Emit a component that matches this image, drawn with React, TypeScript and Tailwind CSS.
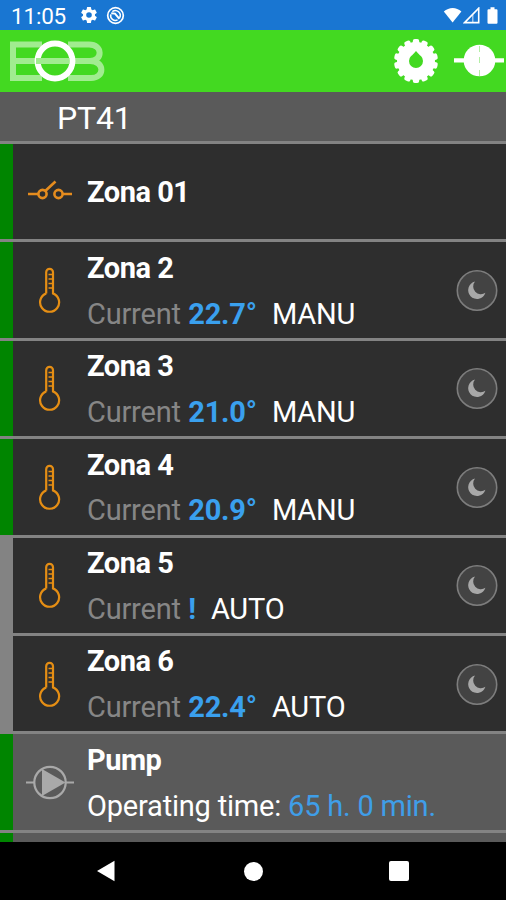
import clsx from "clsx";

type Zone = {
  name: string;
  online: boolean;
  temperature?: string;
  mode?: string;
};

const zones: Zone[] = [
  { name: "Zona 01", online: true },
  { name: "Zona 2", online: true, temperature: "22.7°", mode: "MANU" },
  { name: "Zona 3", online: true, temperature: "21.0°", mode: "MANU" },
  { name: "Zona 4", online: true, temperature: "20.9°", mode: "MANU" },
  { name: "Zona 5", online: false, temperature: "!", mode: "AUTO" },
  { name: "Zona 6", online: false, temperature: "22.4°", mode: "AUTO" },
];

const teeth = Array.from({ length: 14 }, (_, i) => (i * 360) / 14);

function StatusBar() {
  return (
    <div className="flex h-[30px] shrink-0 items-center bg-[#1976d2] pl-[11px] pr-[7px] text-white">
      <span className="w-[70px] pt-[3px] text-[22.5px] leading-none tracking-[-0.2px]">11:05</span>
      <svg width="16" height="16" viewBox="2 2 20 20" fill="currentColor">
        <path
          fillRule="evenodd"
          d="M19.43 12.98a7.8 7.8 0 0 0 0-1.96l2.11-1.65a.5.5 0 0 0 .12-.64l-2-3.46a.5.5 0 0 0-.61-.22l-2.49 1a7.3 7.3 0 0 0-1.69-.98l-.38-2.65A.49.49 0 0 0 14 2h-4a.49.49 0 0 0-.49.42l-.38 2.65c-.61.25-1.17.59-1.69.98l-2.49-1a.5.5 0 0 0-.61.22l-2 3.46a.5.5 0 0 0 .12.64l2.11 1.65a7.9 7.9 0 0 0 0 1.96l-2.11 1.65a.5.5 0 0 0-.12.64l2 3.46c.12.22.39.3.61.22l2.49-1c.52.4 1.08.73 1.69.98l.38 2.65c.03.24.24.42.49.42h4c.25 0 .46-.18.49-.42l.38-2.65c.61-.25 1.17-.59 1.69-.98l2.49 1c.23.09.49 0 .61-.22l2-3.46a.5.5 0 0 0-.12-.64zM12 15.5a3.5 3.5 0 1 1 0-7 3.5 3.5 0 0 1 0 7z"
        />
      </svg>
      <svg className="ml-[9px]" width="19" height="19" viewBox="0 0 19 19" fill="none" stroke="currentColor">
        <circle cx="9.5" cy="9.5" r="7.8" strokeWidth="1.7" />
        <path d="M6.3 5.6a4.9 4.9 0 0 1 7.2 6.4M4.8 8.4a4.8 4.8 0 0 0 6.8 5.5" strokeWidth="1.5" />
        <path d="M5.2 7.2 9 7.6 13.4 12.8" strokeWidth="2" />
      </svg>
      <div className="ml-auto flex items-center">
        <svg width="20" height="16" viewBox="0 0 20 16" fill="currentColor">
          <path d="M.8 4.5C6-.2 13.4-.2 18.4 4.5L9.6 15.4z" />
        </svg>
        <svg width="18" height="17" viewBox="0 0 18 17">
          <path d="M1.6 15.6 15.7 1.2V15.6z" fill="none" stroke="currentColor" strokeWidth="1.6" />
          <path d="M9.8 7.8V15" fill="none" stroke="currentColor" strokeWidth="1.2" opacity=".7" />
        </svg>
        <svg className="ml-[6px]" width="12" height="17" viewBox="0 0 12 17" fill="currentColor">
          <path d="M3.5.3h4v2h2a1 1 0 0 1 1 1V15.7a1 1 0 0 1-1 1h-8a1 1 0 0 1-1-1V3.3a1 1 0 0 1 1-1h2z" />
        </svg>
      </div>
    </div>
  );
}

function Logo() {
  return (
    <svg width="96" height="44" viewBox="0 0 96 44" fill="none">
      <path
        d="M32 5.5H3V39H32M3 22H83M58 5.5H79C93 5.5 93 22 80 22C95 22 95 39 81 39H58"
        opacity=".5"
        stroke="white"
        strokeWidth="6"
      />
      <circle cx="45" cy="22" r="17.4" fill="#43d921" stroke="white" strokeWidth="6" />
      <path d="M26 22H59.5" stroke="#a1ec90" strokeWidth="6" />
    </svg>
  );
}

function Toolbar() {
  return (
    <header className="flex h-[62px] shrink-0 items-center justify-between bg-[#43d921] pl-[10px]">
      <Logo />
      <div className="flex items-center">
        <svg width="46" height="46" viewBox="-23 -23 46 46" fill="white">
          {teeth.map((angle) => (
            <rect key={angle} x="-3.2" y="-22" width="6.4" height="8" rx="2" transform={`rotate(${angle})`} />
          ))}
          <circle r="13" fill="none" stroke="white" strokeWidth="12" />
          <path d="M-4-5.5 0-10 4-5.5z" fill="#43d921" />
        </svg>
        <svg className="ml-[14px]" width="53" height="36" viewBox="0 0 53 36" fill="white">
          <path d="M1 15.2H51V19.4H1z" />
          <circle cx="26.5" cy="17.5" r="15.8" />
          <path d="M26.5 3V9M26.5 14V20M26.5 27V33" stroke="#43d921" strokeWidth="1" opacity=".4" />
        </svg>
      </div>
    </header>
  );
}

function SwitchIcon() {
  return (
    <svg width="48" height="24" viewBox="0 0 48 24" fill="none" stroke="#e58c1e" strokeWidth="2.6">
      <path d="M2 14H12M36 14H46M19.5 10.8 29.5 1.5" />
      <circle cx="16.5" cy="14" r="4.1" />
      <circle cx="32.5" cy="14" r="4.1" />
    </svg>
  );
}

function ThermometerIcon() {
  return (
    <svg width="24" height="46" viewBox="0 0 24 46" fill="none" stroke="#e58e14" strokeWidth="2.2">
      <path d="M8.4 26V5.2a3.3 3.3 0 0 1 6.6 0V26A9.5 9.5 0 1 1 8.4 26z" stroke="none" />
      <path d="M8.2 26.4V5.2a3.4 3.4 0 0 1 6.8 0V26.4A9.5 9.5 0 1 1 8.2 26.4" />
      <path d="M10.5 7.5H14M10.5 12H14M10.5 16.5H14M10.5 21H14" strokeWidth="1.6" />
    </svg>
  );
}

function PumpIcon() {
  return (
    <svg width="50" height="36" viewBox="0 0 50 36" fill="none" stroke="#a9a9a9" strokeWidth="2.2">
      <path d="M1 18.5H9M41 18.5H49" />
      <circle cx="25" cy="18.5" r="15.7" />
      <path d="M17 5 40.5 18.5 17 32z" fill="#a9a9a9" stroke="none" />
    </svg>
  );
}

function MoonBadge() {
  return (
    <svg className="mr-2" width="42" height="42" viewBox="0 0 42 42">
      <circle cx="21" cy="21.5" r="19.7" fill="#434343" stroke="#7d7d7d" strokeWidth="1.6" />
      <path d="M19 12.6a8.8 8.8 0 1 0 10.4 11.2A7.7 7.7 0 0 1 19 12.6z" fill="#a8a8a8" />
    </svg>
  );
}

function ZoneRow({ zone }: { zone: Zone }) {
  return (
    <div className="flex h-[98.4px] shrink-0 items-stretch border-b-3 border-[#838383] bg-[#2e2e2e]">
      <div className={clsx("w-[13px]", zone.online ? "bg-[#008500]" : "bg-[#838383]")} />
      <div className="flex w-[74px] items-center justify-center">
        {zone.temperature ? <ThermometerIcon /> : <SwitchIcon />}
      </div>
      <div className="flex flex-1 flex-col justify-center pt-[3px] text-[29px] leading-[45.8px] tracking-[-0.2px]">
        <div className="font-bold tracking-[-0.5px]">{zone.name}</div>
        {zone.temperature && (
          <div className="flex">
            <span className="text-[#868686]">Current</span>
            <span className="ml-[7.5px] font-bold text-[#3aa0ee]">{zone.temperature}</span>
            <span className="ml-[15px]">{zone.mode}</span>
          </div>
        )}
      </div>
      {zone.temperature && (
        <div className="flex items-center">
          <MoonBadge />
        </div>
      )}
    </div>
  );
}

function PumpRow() {
  return (
    <div className="flex h-[98.4px] shrink-0 items-stretch border-b-3 border-[#838383] bg-[#5a5a5a]">
      <div className="w-[13px] bg-[#008500]" />
      <div className="flex w-[74px] items-center justify-center">
        <PumpIcon />
      </div>
      <div className="flex flex-1 flex-col justify-center pt-[3px] text-[29px] leading-[45.8px] tracking-[-0.2px]">
        <div className="font-bold tracking-[-0.5px]">Pump</div>
        <div>
          Operating time: <span className="text-[#3f9ee8]">65 h. 0 min.</span>
        </div>
      </div>
    </div>
  );
}

function NavigationBar() {
  return (
    <nav className="flex h-[58px] shrink-0 items-center bg-black">
      <svg className="ml-24" width="20" height="22" viewBox="0 0 20 22" fill="white">
        <path d="M1 11 18.5.8V21.2z" />
      </svg>
      <div className="ml-[128px] size-[19px] rounded-full bg-white" />
      <div className="ml-[126px] size-[20px] rounded-[2px] bg-white" />
    </nav>
  );
}

export default function App() {
  return (
    <div className="flex h-[900px] w-[506px] flex-col overflow-hidden bg-black font-['Roboto',sans-serif] text-white">
      <StatusBar />
      <Toolbar />
      <main className="flex h-[750px] flex-col overflow-hidden">
        <div className="h-[52px] shrink-0 border-b-3 border-[#838383] bg-[#5a5a5a] pl-[57px] text-[32px] leading-[52px] tracking-[-0.2px]">
          PT41
        </div>
        {zones.map((zone) => (
          <ZoneRow key={zone.name} zone={zone} />
        ))}
        <PumpRow />
        <div className="flex flex-1 bg-[#5a5a5a]">
          <div className="w-[13px] bg-[#008500]" />
        </div>
      </main>
      <NavigationBar />
    </div>
  );
}
